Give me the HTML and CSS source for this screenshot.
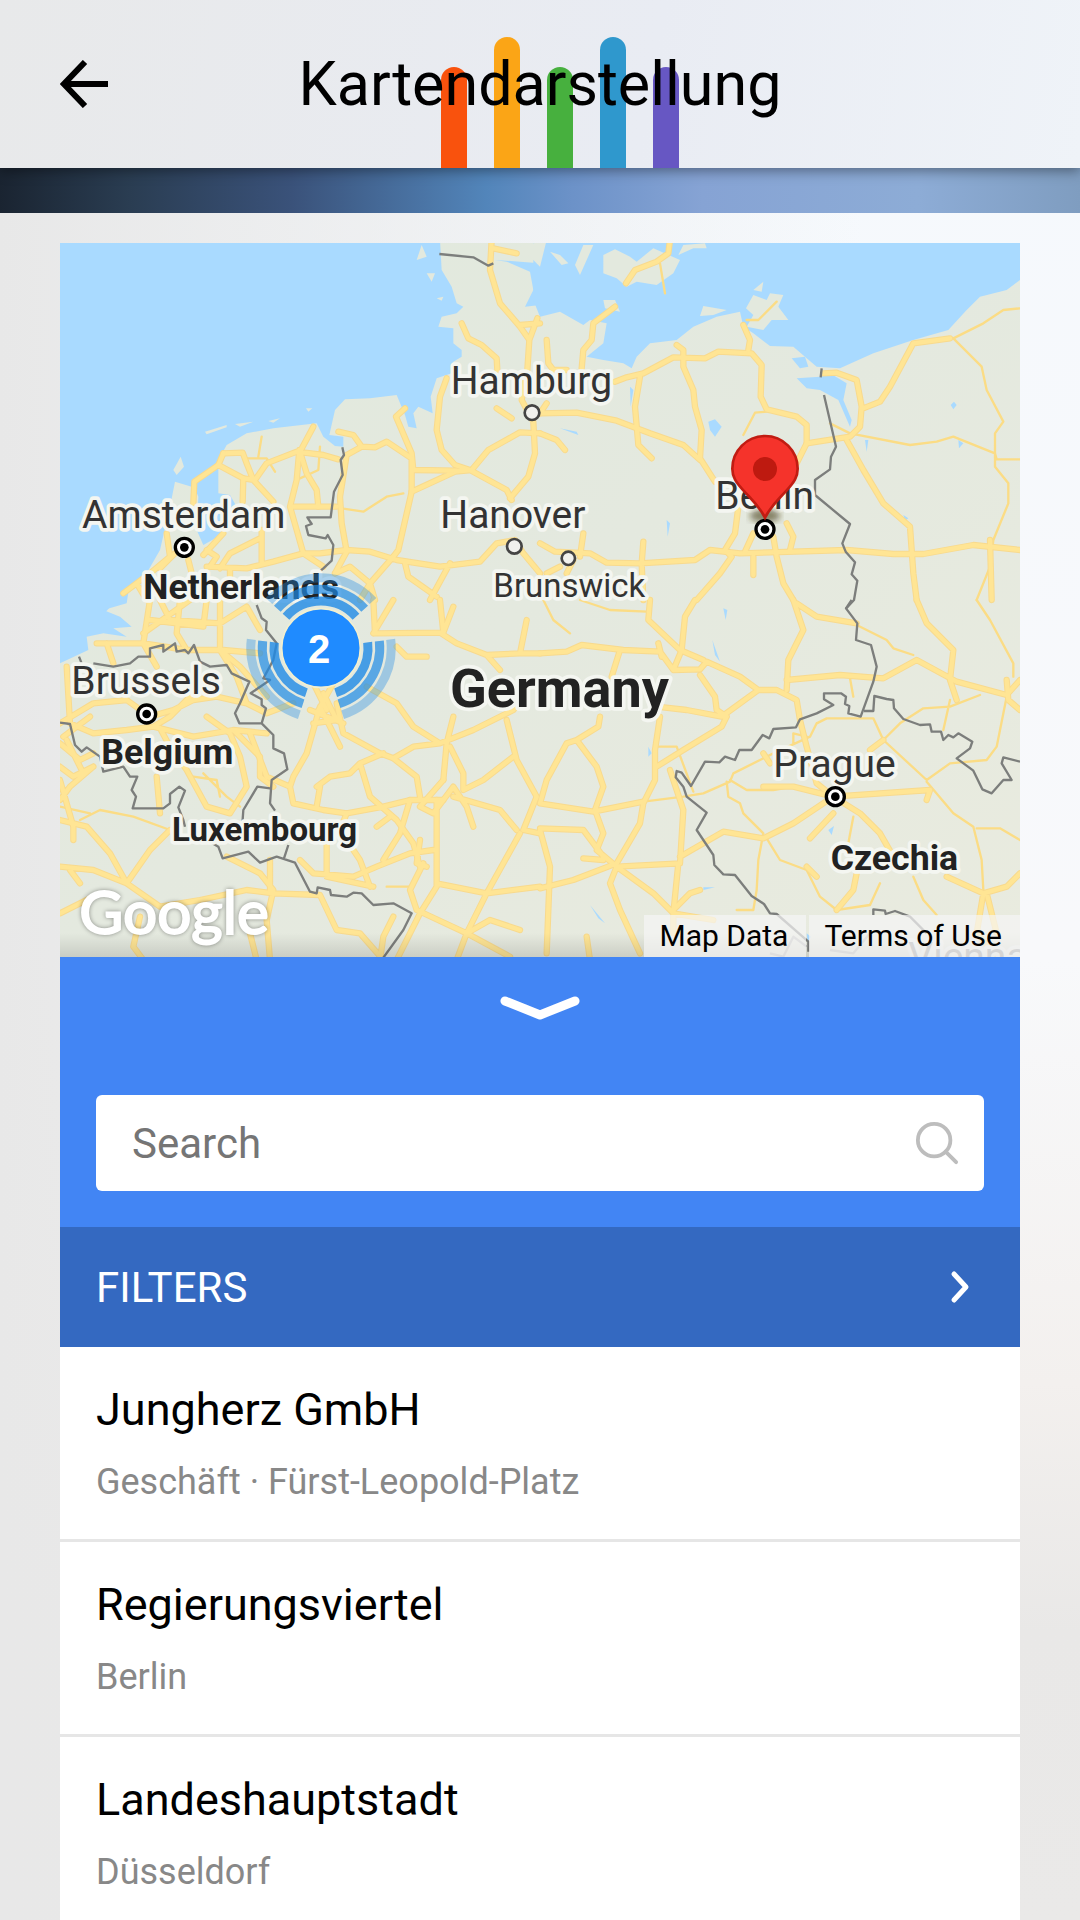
FILE: index.html
```html
<!DOCTYPE html>
<html lang="de">
<head>
    <meta charset="UTF-8">
    <meta name="viewport" content="width=device-width, initial-scale=1.0">
    <title>Kartendarstellung</title>
    <link rel="stylesheet" href="styles.css">
</head>
<body>

    <div class="app">
        <header class="header">
            <button class="back" aria-label="Zurück">
                <svg width="48" height="48" viewBox="0 0 48 48"><path d="M48 24H5M25 2L4 24L25 46" /></svg>
            </button>
            <div class="logo">
                <span class="bar red"></span>
                <span class="bar orange tall"></span>
                <span class="bar green"></span>
                <span class="bar blue tall"></span>
                <span class="bar violet"></span>
            </div>
            <h1>Kartendarstellung</h1>
        </header>
        <div class="banner"></div>

        <main class="content">
            <div class="map">
                <svg class="map-canvas" viewBox="0 0 2880 2142">
                    <defs>
                        <linearGradient id="land" x1="0" y1="0" x2="1" y2="1">
                            <stop offset="0" stop-color="#e1e9dd" />
                            <stop offset="0.5" stop-color="#e4e9df" />
                            <stop offset="1" stop-color="#e9ebdf" />
                        </linearGradient>
                        <linearGradient id="fade" x1="0" y1="0" x2="0" y2="1">
                            <stop offset="0" stop-color="#000" stop-opacity="0" />
                            <stop offset="1" stop-color="#000" stop-opacity="0.12" />
                        </linearGradient>
                        <filter id="glow"><feGaussianBlur stdDeviation="9" /></filter>

                        <g id="roads">
                            <g transform="translate(0 -9)">
                                <path d="M1295 0L1290 90L1320 190L1380 260L1408 300L1402 390L1385 480L1420 545L1425 640L1405 710L1350 775M1300 25L1370 40M1380 255L1440 250M1408 300L1432 235" />
                                <path d="M1205 250L1225 295L1265 315L1310 355L1312 390M1160 415L1140 470L1130 570L1145 630L1185 675L1230 690L1340 750L1355 780M1035 505L1008 530L1055 640L1060 690L1190 692M1055 755L1185 695L1235 690L1285 630L1380 577L1440 580" />
                                <path d="M835 575L880 585L905 620L945 622L980 605L1055 655L1055 755L1015 930L1000 950M905 620L860 645L840 770L845 850L860 935L825 1000M490 640L548 638L560 670L580 720L640 785M400 790L403 725L475 675L550 715L585 720L620 670L710 635L790 645L835 658M760 560L720 635L740 700L770 750L775 800M718 630L710 720L690 800L710 870L730 940L790 980" />
                                <path d="M475 675L490 640M550 715L548 785M700 800L830 800M605 870L605 970M430 945L490 880M480 985L510 940L600 895M300 985L345 940M440 980L560 985L640 965L730 940L780 940L860 930L930 935L1010 960L1140 980L1260 965L1310 910L1365 900L1390 940L1440 1000M1000 950L930 1030L900 1080M1035 970L1045 1010L1130 1070M1170 970L1110 1080M1310 505L1355 535M320 880L330 950L270 1000L190 1060M385 960L395 1000M440 930L470 950L450 980M825 1000L870 980L930 1030L945 1080M230 1030L260 1080M510 985L510 1010" />
                            </g>
                            <g transform="translate(1440 -9)">
                                <path d="M390 0L385 40L350 65L285 90L258 130M225 200L160 250L155 300L130 330L125 385M20 300L25 370L40 390L80 390M225 425L260 412L310 400L400 352L495 355L535 335L635 340L665 375L662 470L680 508L770 530L800 555L800 610L770 670M410 315L430 330L430 380L460 450L465 500L485 570L480 655L525 725M300 410L285 500L295 615L335 655" />
                                <path d="M0 520L110 518L230 542L330 580L430 615L480 660M800 610L930 590L960 560L965 500L950 420L890 398L850 400M970 505L1020 485L1050 440L1120 310L1230 295M920 600L970 690L1030 790L1110 860L1120 1000L1130 1080M0 910L45 935L150 940L200 968L300 970L465 960L510 930L600 940L920 930L1060 942L1150 942L1300 915L1440 930M310 905L305 970L310 1080" />
                                <path d="M595 800L585 880L555 930L575 950L540 1000L470 1080M700 890L710 950L730 1030L760 1080M740 850L760 890L750 930M640 880L615 935M640 950L640 1005M130 880L120 950M0 580L50 600L75 630M60 980L20 1000M610 255L630 300L625 330M100 960L80 1000M20 490L0 520M1355 1080L1350 900" />
                            </g>
                            <g transform="translate(0 1071)">
                                <path d="M250 100L390 0M110 130L250 130L380 150L490 150L600 160M270 0L250 130L290 200M360 0L350 100L380 150M440 0L430 80L270 60M480 0L480 150L530 230L560 310L620 340L700 310M0 370L100 310L200 300L270 350L340 330L400 300L470 290L560 310M20 200L30 370L100 400L200 390L280 380L400 410L520 390L620 400M300 385L330 440L380 510L440 620L510 640L560 560L540 470L510 400L440 350M0 430L60 480L100 460M0 500L40 530L100 500M20 420L70 520M0 540L40 680L40 720M290 530L300 640M300 0L330 60L480 70L560 20L600 90M140 130L160 190M400 280L330 350L280 380M520 390L600 470L600 530L640 560M0 600L30 560L100 500M90 350L10 410M480 150L540 200L620 290" />
                                <path d="M570 400L620 530L690 560L700 610L790 630L860 640L970 620L1050 600L1150 600M740 460L780 320L840 440M740 460L700 530L690 560M830 310L850 400L960 460L1000 475L1070 530L1080 590M750 330L850 370M790 280L830 360L760 370M900 490L930 590L1010 660L1060 730L1080 800M770 560L810 530L870 520L900 490L970 460M940 0L945 100L1140 98L1190 130L1280 165L1320 210M780 560L770 620M1000 0L940 100M1140 0L1150 98M920 260L1010 310L1060 380L1140 430L1240 390L1360 330L1400 280M1160 430L1150 540M1170 440L1210 520L1210 570L1270 540L1360 470M1340 360L1370 480L1430 590L1390 690L1440 700M1180 350L1160 430M1150 98L1180 20M1010 140L1040 170L1100 170M1280 165L1380 160L1400 60M1380 160L1440 160M1000 475L1060 440L1140 430M760 250L800 330M820 250L770 340" />
                                <path d="M0 660L80 680L150 760L200 850L300 920L420 900L560 870L640 880L780 885L830 990L900 1000L970 1080M200 850L270 750L330 690M200 850L100 810L0 800M0 940L100 890M250 1080L220 1040L240 950M500 770L600 820L640 870L620 960L630 1080M720 780L760 820L880 830L950 800L1050 760L1120 750M800 730L800 830L940 860M1130 600L1130 860L1080 940L1010 1080M1090 790L1050 870L1070 930L1220 1000L1190 1080M1130 850L1280 880L1440 860M1380 700L1280 880L1220 1000L1350 1070M1220 1000L1290 960L1380 990M860 640L840 690L900 780L930 860M1050 600L1020 700L970 780M1150 540L1080 620L1120 640L1180 560L1220 620L1240 680M1180 590L1320 630L1370 690M990 650L950 680M590 1080L570 1000M630 780L630 870M30 810L60 850M960 1080L970 1010L1000 950M1080 720L1070 790L1100 800" />
                            </g>
                            <g transform="translate(1440 1071)">
                                <path d="M0 160L80 155L125 135L250 150L360 155L400 210L480 208L500 185L600 230L655 270L710 270L770 300L780 360L800 440L830 550L880 590M330 0L325 60L420 150L490 180M465 0L435 50L425 150L400 210M240 150L215 230M355 130L365 170M480 225L525 290L530 330L560 350M350 320L440 330L545 350L655 270M560 350L545 380L430 450L350 500M360 350L345 450L345 540L310 610L300 670L230 790L100 840L0 865M760 0L790 90L745 180L740 270M770 10L830 50L950 70M740 240L900 225L1030 235L1130 180L1250 245L1400 285L1440 240M1130 0L1160 70L1240 150L1230 240L1250 300" />
                                <path d="M180 350L175 380L110 420L80 430L20 540L0 610L160 635L310 605M110 420L170 500L190 560L165 630L190 700L170 750L230 800L420 790L430 630L390 510M0 685L130 690L190 770M230 800L210 850L240 930L300 1060M230 800L340 880L400 940L520 960M415 790L400 940L400 1000M0 690L30 800L20 1060M420 770L550 695L670 715L760 670L880 590L1170 570L1160 600M670 560L760 560L880 590L960 640L1020 700L1060 770M880 640L810 715M1030 420L990 450M800 800L830 830M950 820L940 870L890 930M1220 830L1330 880L1400 860L1440 820M1330 880L1310 1000L1380 1080M1340 880L1370 1000M400 930L450 880L480 870M140 1010L150 1080M130 775L190 780M1400 240L1405 300L1440 330M670 460L690 490" />
                            </g>
                        </g>

                        <g id="lanes">
                            <g transform="translate(0 -9)">
                                <path d="M845 805L910 815L980 770L1030 760M560 655L620 655L645 695M780 620L775 690L720 715M605 590L595 650" />
                            </g>
                            <g transform="translate(1440 -9)">
                                <path d="M360 70L375 160M620 240L655 240L710 185M1240 295L1330 250L1390 210L1440 205M1240 295L1325 380L1340 450L1390 545L1365 580L1365 680L1405 730L1405 790L1360 900L1350 980L1310 1080M870 550L930 580L1110 615L1190 605L1240 590L1365 640L1370 658L1440 658M680 515L645 518L610 585" />
                            </g>
                            <g transform="translate(0 1071)">
                                <path d="M60 660L120 630L220 650L330 690M430 520L500 590L540 620M400 530L470 540L480 590M0 620L90 640M980 860L1050 860" />
                            </g>
                            <g transform="translate(1440 1071)">
                                <path d="M350 440L410 440L460 575M950 75L1040 120L1060 145L1120 165M830 370L860 355L1000 355L1030 420L1080 370L1150 325L1230 320L1320 285M1030 420L1160 540L1230 490L1340 480L1370 440L1400 290M830 370L810 410L700 460L580 520L570 545L490 580L430 590L310 605M570 540L620 570L700 570L760 560M560 545L565 590L600 610L610 640L670 700L655 780L650 870L640 930L590 930M680 715L720 780L800 810L840 890L890 930L990 915L1020 850M1160 545L1240 640L1300 680L1325 780L1330 870M940 650L925 730M1120 830L1150 900L1190 945M1310 685L1380 685L1440 720M930 235L940 290M1310 0L1350 60L1420 190V230M1230 300L1210 390M120 0L210 30L320 35M10 0L40 60L90 100M760 430L760 400L800 410" />
                            </g>
                        </g>
                    </defs>

                    <rect class="land" width="2880" height="2142" />

                    <g class="sea">
                        <!-- north sea -->
                        <path transform="translate(0 -9)" d="M0 0H1140L1145 90L1175 140L1190 190L1210 200L1190 220L1145 230L1135 260L1180 265L1180 310L1205 330L1205 350L1180 365L1175 400L1130 415L1112 470L1118 520L1075 500L1060 520L1070 565L1045 560L1035 525L1010 465L930 475L855 478L825 510L808 585L850 590L850 620L825 618L790 590L770 550L640 565L560 580L500 615L470 670L405 720L395 740L345 725L330 800L300 930L260 1000L190 1060L0 1260Z" />
                        <path transform="translate(0 1071)" d="M0 -120H220L200 10L130 30L180 50L215 80L160 85L200 110L130 100L80 110L85 150L0 190Z" />
                        <path transform="translate(0 -9)" d="M475 670L475 760L510 765L530 800L510 870L430 915L410 870L415 770L400 735ZM1305 60L1380 65L1440 70V195L1395 200L1420 150L1410 95L1340 65ZM1430 0H1500V70H1440Z" />
                        <!-- baltic sea -->
                        <path transform="translate(1440 -9)" d="M-20 0H1440V120L1400 150L1320 170L1280 210L1225 270L1120 300L1000 340L900 385L830 380L760 320L690 318L640 280L610 260L600 215L530 230L460 260L410 300L330 310L290 350L275 385L250 370L190 360L140 350L190 310L200 250L150 240L130 255L60 215L0 230L-20 180Z" />
                        <path transform="translate(1440 -9)" d="M770 415L840 410L870 400L920 430L910 480L935 540L930 560L895 480L840 450L800 445ZM755 355L795 350L805 380L780 385ZM505 545L525 538L545 560L525 590L510 570ZM1232 495L1242 485L1250 495L1240 508ZM1255 600L1270 610L1257 625ZM975 600L985 600L980 635ZM60 565L110 575L115 585ZM380 840L390 850L383 890ZM270 440L280 450L272 500ZM1090 825L1105 835L1095 842Z" />
                        <path transform="translate(1440 1071)" d="M550 25L562 30L557 60ZM517 120L540 185L525 165ZM325 440L335 460L325 470ZM865 690L882 678L875 705ZM355 150L395 205L375 180ZM490 862L525 862L490 870ZM150 915L195 970L175 955ZM800 1000L812 1010L803 1030Z" />
                    </g>

                    <g class="isles">
                        <path transform="translate(0 -9)" d="M435 575L500 555L500 562L440 583ZM525 552L580 545L540 560ZM625 543L660 535L640 548ZM738 505L757 505L745 515ZM340 690L362 650L372 680L350 705ZM1085 15L1070 60L1100 50ZM1100 100L1125 100L1115 125ZM1130 175L1150 170L1145 182ZM1310 60L1400 10L1430 50L1380 45Z" />
                        <path transform="translate(1440 -9)" d="M130 15L160 15L120 105L105 75ZM30 35L60 45L85 70L65 75ZM190 45L225 28L270 50L290 65L340 25L420 60L400 100L350 135L290 125L260 140L230 115L190 100ZM415 45L430 15L495 10L500 25L460 25ZM190 180L225 180L240 215L195 205ZM480 228L490 198L560 210L520 225ZM640 150L670 125L665 155ZM618 205L640 165L680 180L690 160L730 165L715 200L745 240L695 240L670 270L620 260L640 225ZM-60 20L20 0L0 80Z" />
                    </g>

                    <use href="#lanes" class="lane" />
                    <use href="#roads" class="road-edge" />
                    <use href="#roads" class="road" />

                    <g class="border">
                        <path transform="translate(0 -9)" d="M1138 42L1240 52L1285 77L1300 70M847 622L852 645L842 660L848 705L822 755L812 832L742 832L755 852L738 858L745 885L797 895L803 885L820 915L815 962L790 985L750 1020" />
                        <path transform="translate(1440 -9)" d="M845 385L842 412M852 465L888 620L873 650L870 688L825 720L825 765L930 852L907 910L917 935L945 967L935 1003L952 1022L942 1080L917 1107" />
                        <path transform="translate(0 1071)" d="M590 15L605 55L620 65L618 90L650 130L640 180L610 235L630 240L572 280L605 298L605 315L618 325L605 370L640 405L640 445L672 460L682 508L635 540L630 610L645 632M57 170L65 190M100 190L160 200L210 190L235 170L270 170L270 145L310 135L310 155L345 130L350 155L375 150L385 160L402 135L420 185L450 200L500 195L515 220L568 245L540 310L525 340L538 370L605 370M0 368L30 372L45 435L65 455L80 442L120 470L130 515L190 500L210 530L232 530L215 570L228 590L218 625L310 625L330 610L330 582L358 560L375 572L355 622L370 660L375 680M630 565L592 560L550 630L545 700M440 720L475 740L488 775L565 755L600 788L650 770L705 788L750 875L770 880L773 862L810 870L813 885L860 890L880 878L905 880L940 915L1000 910L1055 940L1030 990L965 1080M685 735L672 775" />
                        <path transform="translate(1440 1071)" d="M935 0L918 25L952 70L948 120L993 135L1010 200L1000 245L962 350L925 340L928 318L915 312L918 290L903 280H852V298L880 315L830 340L780 358L768 382L700 387L688 415L668 405L635 450L598 450L585 480L555 470L538 487L495 485L453 558L425 518L410 513L407 532L430 560L440 590L500 638L470 690L520 765L523 795L550 823L585 825L635 888L672 912L690 940L710 942L805 1025V1055M972 333H1000L1003 288L1040 297L1060 300L1062 325L1090 357L1140 375L1170 373L1175 395L1203 395L1210 420L1225 405L1240 412L1255 400L1297 425L1290 445L1250 475L1300 512L1327 568L1355 580L1390 540L1415 540L1385 490L1390 472L1440 485M1000 945V928L1035 932L1037 942L1065 933L1110 950L1160 1000" />
                    </g>
                    <path class="border faint" transform="translate(1440 1071)" d="M690 1060L730 1070L760 1010L800 1040M870 1050L940 1060L990 1000" />

                    <g class="city">
                        <circle cx="1416" cy="509" r="22" />
                        <circle cx="1363" cy="910" r="22" />
                        <circle cx="1525" cy="946" r="20" />
                    </g>
                    <g class="capital">
                        <circle cx="373" cy="913" r="27" /><circle class="dot" cx="373" cy="913" r="13" />
                        <circle cx="260" cy="1413" r="27" /><circle class="dot" cx="260" cy="1413" r="13" />
                    </g>

                    <g class="label">
                        <text x="66" y="854">Amsterdam</text>
                        <text x="1172" y="454">Hamburg</text>
                        <text x="1141" y="854">Hanover</text>
                        <text x="1966" y="799">Berlin</text>
                        <text x="34" y="1353">Brussels</text>
                        <text x="2140" y="1601">Prague</text>
                        <text class="small" x="1300" y="1061">Brunswick</text>
                        <text class="country" x="250" y="1069">Netherlands</text>
                        <text class="country" x="124" y="1564">Belgium</text>
                        <text class="country small" x="336" y="1793">Luxembourg</text>
                        <text class="country" x="2312" y="1881">Czechia</text>
                        <text class="country large" x="1170" y="1391">Germany</text>
                        <text class="muted" x="2545" y="2180">Vienna</text>
                    </g>

                    <!-- berlin pin -->
                    <ellipse class="pin-shadow" cx="2115" cy="818" rx="46" ry="20" />
                    <g class="capital">
                        <circle cx="2326" cy="1661" r="27" /><circle class="dot" cx="2326" cy="1661" r="13" />
                        <circle cx="2115" cy="859" r="27" /><circle class="dot" cx="2115" cy="859" r="13" />
                    </g>
                    <path class="pin" d="M2115 824C2098 790 2080 775 2050 742C2028 718 2017 702 2017 677A98 98 0 0 1 2213 677C2213 702 2202 718 2180 742C2150 775 2132 790 2115 824Z" />
                    <circle class="pin-dot" cx="2115" cy="678" r="36" />

                    <!-- cluster, three arcs per ring -->
                    <g class="cluster" transform="translate(783 1215)">
                        <path class="ring r1" d="M-105 -94A141 141 0 0 1 105 -94M140 -17A141 141 0 0 1 44 134M-140 -17A141 141 0 0 0 -44 134" />
                        <path class="ring r2" d="M-131 -118A176 176 0 0 1 131 -118M175 -21A176 176 0 0 1 54 167M-175 -21A176 176 0 0 0 -54 167" />
                        <path class="ring r3" d="M-156 -141A210 210 0 0 1 156 -141M209 -26A210 210 0 0 1 65 200M-209 -26A210 210 0 0 0 -65 200" />
                        <circle class="core" r="118" />
                        <text x="-6" y="44">2</text>
                    </g>

                    <rect class="fade" y="2070" width="2880" height="72" />
                    <text class="brand" x="58" y="2072">Google</text>
                </svg>
                <div class="map-links">
                    <a href="#">Map Data</a>
                    <a href="#">Terms of Use</a>
                </div>
            </div>

            <section class="panel">
                <button class="collapse" aria-label="Einklappen">
                    <svg width="80" height="26" viewBox="0 0 80 26"><path d="M5 6L40 20L75 6" /></svg>
                </button>
                <label class="search">
                    <input type="text" placeholder="Search" aria-label="Search">
                    <svg width="44" height="44" viewBox="0 0 46 46"><circle cx="20" cy="20" r="17" /><path d="M32 32L43 43" /></svg>
                </label>
            </section>

            <button class="filters">
                <span>FILTERS</span>
                <svg width="20" height="34" viewBox="0 0 20 34"><path d="M4 4L16 17L4 30" /></svg>
            </button>

            <ul class="places">
                <li>
                    <h2>Jungherz GmbH</h2>
                    <p>Geschäft · Fürst-Leopold-Platz</p>
                </li>
                <li>
                    <h2>Regierungsviertel</h2>
                    <p>Berlin</p>
                </li>
                <li>
                    <h2>Landeshauptstadt</h2>
                    <p>Düsseldorf</p>
                </li>
            </ul>
        </main>
    </div>

</body>
</html>
```
FILE: styles.css
```css
* {
    box-sizing: border-box;
}
body {
    margin: 0;
    font-family: Roboto, sans-serif;
    color: #000;
}
button {
    border: none;
    background: none;
    padding: 0;
    font-family: inherit;
    cursor: pointer;
}
svg {
    display: block;
}
.app {
    height: 100vh;
    overflow: hidden;
    display: flex;
    flex-direction: column;
    background: linear-gradient(to right, #e8e8e8, rgba(232, 232, 232, 0) 80%),
        linear-gradient(#f5f9fd, #f8f9fb 50%, #f3f0ee 72%, #e9e8e7 85%, #eae9e8);
}

/* header */
.header {
    position: relative;
    z-index: 1;
    flex: none;
    height: 168px;
    display: flex;
    align-items: center;
    justify-content: center;
    background: linear-gradient(100deg, #e8e9ea, #e9ecf3 60%, #eff3f8);
    box-shadow: 0 3px 12px rgba(0, 0, 0, 0.4);
}
.header h1 {
    position: relative;
    margin: 0;
    font-size: 61px;
    font-weight: 400;
}
.back {
    position: absolute;
    left: 60px;
}
.back path {
    fill: none;
    stroke: #000;
    stroke-width: 6;
}
.logo {
    position: absolute;
    bottom: 0;
    left: 50%;
    margin-left: -99px;
    display: flex;
    align-items: flex-end;
    gap: 27px;
}
.bar {
    width: 26px;
    height: 101px;
    border-radius: 13px 13px 0 0;
}
.tall {
    height: 131px;
}
.red {
    background: #f9520d;
}
.orange {
    background: #fba516;
}
.green {
    background: #47b03e;
}
.blue {
    background: #2f98cd;
}
.violet {
    background: #6757c3;
}
.banner {
    flex: none;
    height: 45px;
    background: linear-gradient(to right, #1a2431, #2a3d52 12%, #3a527a 27%, #5285ba 45%, #6c92c8 53%, #86a3d4 65%, #8dacd6 85%, #7f9dc0);
}

/* map */
.content {
    flex: none;
    padding: 30px 60px 0;
}
.map {
    position: relative;
    overflow: hidden;
}
.map-canvas {
    width: 100%;
}
.land {
    fill: url(#land);
}
.sea {
    fill: #a9daff;
}
.isles {
    fill: #e3e9de;
}
.lane,
.road,
.road-edge {
    fill: none;
    stroke: #fbdc85;
    stroke-width: 7;
    stroke-linejoin: round;
    stroke-linecap: round;
}
.road {
    stroke: #ffe594;
    stroke-width: 13;
}
.road-edge {
    stroke: #f8da8e;
    stroke-width: 19;
}
.border {
    fill: none;
    stroke: #7c7e7c;
    stroke-width: 7;
    stroke-linejoin: round;
}
.faint {
    stroke: #bbb;
}
.city circle {
    fill: #f1f1ee;
    stroke: #444;
    stroke-width: 8;
}
.capital circle {
    fill: #fff;
    stroke: #000;
    stroke-width: 10;
}
.capital .dot {
    fill: #000;
    stroke: none;
}
.label {
    font-size: 117px;
    fill: #333;
    stroke: #f4f6f1;
    stroke-width: 22px;
    stroke-linejoin: round;
    paint-order: stroke;
}
.label .country {
    font-size: 107px;
    font-weight: 700;
    fill: #222;
}
.label .small {
    font-size: 99px;
}
.label .large {
    font-size: 162px;
}
.label .muted {
    fill: #999;
}
.pin-shadow {
    fill: rgba(70, 60, 20, 0.6);
    filter: url(#glow);
}
.pin {
    fill: #f5332b;
    stroke: #c11c12;
    stroke-width: 8;
}
.pin-dot {
    fill: #be1a10;
}
.ring {
    fill: none;
    stroke: #1e8ae6;
    stroke-width: 27;
}
.r1 {
    opacity: 0.8;
}
.r2 {
    opacity: 0.7;
}
.r3 {
    opacity: 0.35;
}
.core {
    fill: #1f8bff;
    stroke: #f2efcf;
    stroke-width: 5;
}
.cluster text {
    font-family: "Liberation Sans", sans-serif;
    font-size: 120px;
    font-weight: 700;
    text-anchor: middle;
    fill: #fff;
}
.fade {
    fill: url(#fade);
}
.brand {
    font-family: Lato, sans-serif;
    font-size: 181px;
    fill: #fff;
    stroke: #fff;
    stroke-width: 6;
    filter: drop-shadow(0 0 6px rgba(0, 0, 0, 0.4));
}
.map-links {
    position: absolute;
    right: 0;
    bottom: 0;
    display: flex;
    gap: 3px;
}
.map-links a {
    padding: 0 18px 0 15px;
    font-size: 30px;
    line-height: 42px;
    color: #000;
    text-decoration: none;
    background: rgba(245, 245, 245, 0.7);
}

/* search panel */
.panel {
    padding: 0 36px 36px;
    background: #4285f4;
}
.collapse {
    display: block;
    width: 100%;
    padding: 38px 0 74px;
}
.collapse svg {
    margin: auto;
}
.collapse path,
.filters path {
    fill: none;
    stroke: #fff;
    stroke-width: 9;
    stroke-linecap: round;
    stroke-linejoin: round;
}
.search {
    display: flex;
    align-items: center;
    height: 96px;
    padding: 0 25px 0 36px;
    background: #fff;
    border-radius: 6px;
}
.search input {
    flex: 1;
    min-width: 0;
    padding: 0;
    border: none;
    outline: none;
    background: none;
    font-family: inherit;
    font-size: 42px;
}
.search input::placeholder {
    color: #757575;
}
.search svg {
    fill: none;
    stroke: #bdbdbd;
    stroke-width: 4;
    stroke-linecap: round;
}
.filters {
    display: flex;
    align-items: center;
    justify-content: space-between;
    width: 100%;
    height: 120px;
    padding: 0 50px 0 36px;
    background: #3469c1;
    color: #fff;
    font-size: 42px;
}
.filters path {
    stroke-width: 5;
}

/* results */
.places {
    margin: 0;
    padding: 0;
    list-style: none;
    background: #fff;
}
.places li {
    height: 195px;
    padding: 36px 36px 0;
    border-bottom: 3px solid #e6e6e6;
}
.places h2 {
    margin: 0;
    font-size: 45px;
    font-weight: 400;
    line-height: 54px;
}
.places p {
    margin: 24px 0 0;
    font-size: 36px;
    line-height: 42px;
    color: #888;
}
```
